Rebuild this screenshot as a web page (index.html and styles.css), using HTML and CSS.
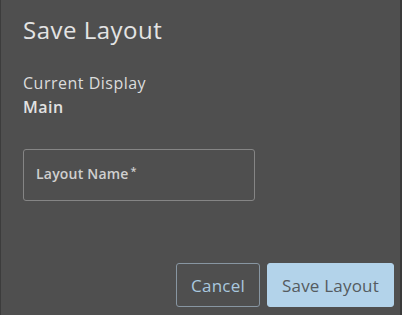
FILE: index.html
```html
<!DOCTYPE html>
<html>
<head>
<meta charset="utf-8">
<link rel="stylesheet" href="styles.css">
</head>
<body>
<div class="dialog">
  <h1 class="title">Save Layout</h1>
  <div class="info">
    <div class="info-label">Current Display</div>
    <div class="info-value">Main</div>
  </div>
  <div class="field">
    <span class="field-label">Layout Name</span><span class="req">*</span>
  </div>
  <div class="footer">
    <button class="btn btn-outline">Cancel</button>
    <button class="btn btn-primary">Save Layout</button>
  </div>
</div>
</body>
</html>
```
FILE: styles.css
```css
html, body {
  margin: 0;
  padding: 0;
  background: #4f4f4f;
}
.dialog {
  box-sizing: border-box;
  width: 402px;
  height: 315px;
  display: flex;
  flex-direction: column;
  align-items: flex-start;
  padding: 15px 6px 8px 22px;
  font-family: "Open Sans", sans-serif;
  border-left: 1px solid #3c3c3c;
  border-right: 2px solid #3a3a3a;
}
.title {
  margin: 0;
  font-size: 24px;
  font-weight: 400;
  line-height: 30px;
  color: #e4e4e4;
  letter-spacing: 0.5px;
}
.info {
  margin-top: 26px;
  color: #dcdcdc;
  font-size: 16px;
  line-height: 24px;
  letter-spacing: 0.5px;
}
.info-label {
  font-weight: 400;
}
.info-value {
  font-weight: 600;
  color: #e2e2e2;
}
.field {
  margin-top: 30px;
  box-sizing: border-box;
  width: 232px;
  height: 52px;
  border: 1px solid #858585;
  border-radius: 3px;
  padding: 14px 0 0 12px;
  color: #cfcfcf;
  font-size: 14px;
  font-weight: 600;
  line-height: 20px;
  letter-spacing: 0.2px;
}
.req {
  font-size: 11px;
  vertical-align: top;
  margin-left: 2px;
  position: relative;
  top: -3px;
}
.footer {
  margin-top: auto;
  align-self: stretch;
  display: flex;
  justify-content: flex-end;
  gap: 7px;
}
.btn {
  box-sizing: border-box;
  height: 44px;
  border-radius: 3px;
  font-family: "Open Sans", sans-serif;
  font-size: 17px;
  letter-spacing: 0.2px;
  padding: 0 8px;
}
.btn-outline {
  width: 84px;
  background: transparent;
  border: 1px solid #8896a2;
  color: #a9c8df;
}
.btn-primary {
  width: 127px;
  background: #b3d3ea;
  border: 1px solid #b3d3ea;
  color: #555b60;
}
```
